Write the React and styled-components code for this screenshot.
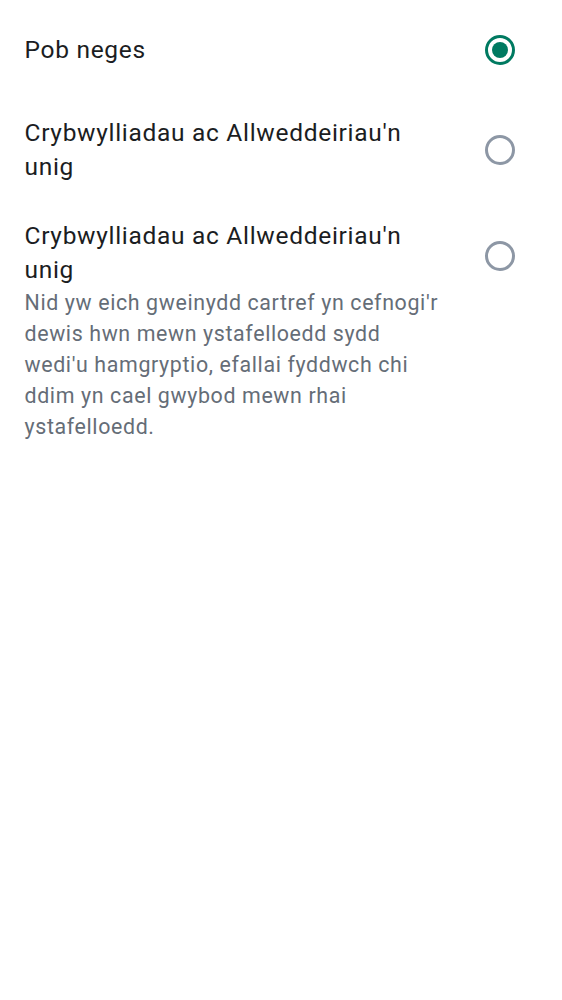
import React, { useState } from 'react';
import styled, { createGlobalStyle } from 'styled-components';

const GlobalStyle = createGlobalStyle`
  body {
    margin: 0;
    background: #ffffff;
    font-family: Roboto, "Noto Sans", sans-serif;
  }
`;

const List = styled.div`
  display: flex;
  flex-direction: column;
  background: #ffffff;
`;

const Row = styled.label`
  display: flex;
  align-items: ${props => (props.$alignTop ? 'flex-start' : 'center')};
  gap: 21px;
  padding: ${props => (props.$alignTop ? '18.6px' : '16px')} 29px 16px 24.5px;
  cursor: pointer;
`;

const TextBlock = styled.div`
  flex: 1;
  min-width: 0;
  display: flex;
  flex-direction: column;
`;

const Title = styled.div`
  font-size: 24.5px;
  line-height: 34px;
  color: #1b1d22;
  letter-spacing: 0.7px;
`;

const Subtitle = styled.div`
  font-size: 21.4px;
  line-height: 31px;
  color: #656d77;
  letter-spacing: 0.62px;
`;

const RadioBox = styled.span`
  width: 67px;
  height: 68px;
  flex-shrink: 0;
  display: flex;
  align-items: center;
  justify-content: center;
  margin-top: ${props => (props.$alignTop ? '3.4px' : '0')};
`;

const RadioRing = styled.span`
  box-sizing: border-box;
  width: 30px;
  height: 30px;
  border-radius: 50%;
  border: 3px solid ${props => (props.$checked ? '#007a61' : '#8d97a5')};
  display: flex;
  align-items: center;
  justify-content: center;

  &::after {
    content: '';
    width: 16px;
    height: 16px;
    border-radius: 50%;
    background: #007a61;
    display: ${props => (props.$checked ? 'block' : 'none')};
  }
`;

const options = [
  { id: 'all', title: 'Pob neges' },
  { id: 'mentions', title: "Crybwylliadau ac Allweddeiriau'n unig" },
  {
    id: 'mentions-unsupported',
    title: "Crybwylliadau ac Allweddeiriau'n unig",
    subtitle:
      "Nid yw eich gweinydd cartref yn cefnogi'r dewis hwn mewn ystafelloedd sydd wedi'u hamgryptio, efallai fyddwch chi ddim yn cael gwybod mewn rhai ystafelloedd.",
  },
];

const App = () => {
  const [selected, setSelected] = useState('all');

  return (
    <>
      <GlobalStyle />
      <List>
        {options.map(option => {
          const alignTop = Boolean(option.subtitle);
          return (
            <Row
              key={option.id}
              $alignTop={alignTop}
              onClick={() => setSelected(option.id)}
            >
              <TextBlock>
                <Title>{option.title}</Title>
                {option.subtitle && <Subtitle>{option.subtitle}</Subtitle>}
              </TextBlock>
              <RadioBox $alignTop={alignTop}>
                <RadioRing $checked={selected === option.id} />
              </RadioBox>
            </Row>
          );
        })}
      </List>
    </>
  );
};

export default App;
